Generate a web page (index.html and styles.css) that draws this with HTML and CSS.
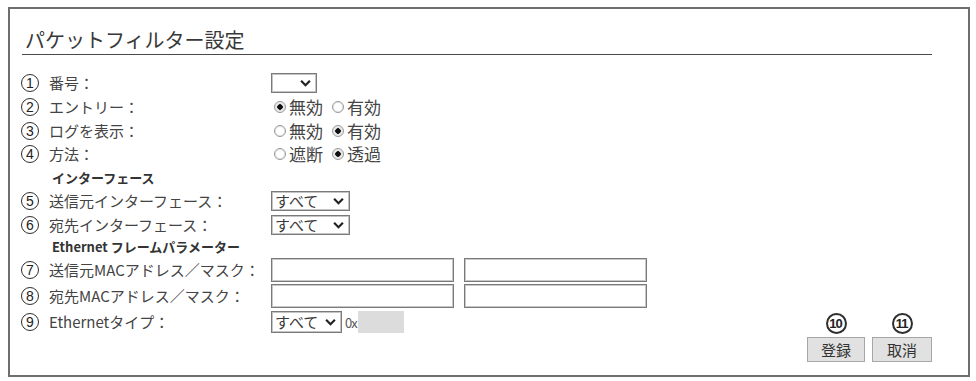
FILE: index.html
```html
<!DOCTYPE html>
<html lang="ja">
<head>
<meta charset="utf-8">
<title>パケットフィルター設定</title>
<link rel="stylesheet" href="styles.css">
</head>
<body>
<div class="panel">
  <div class="title-wrap"><h1 class="title">パケットフィルター設定</h1></div>
  <div class="body">
    <div class="form">
      <div class="row h22">
        <span class="num">1</span><span class="label">番号：</span>
        <span class="sel sel-num"><select class="select"><option></option></select><svg class="chev" viewBox="0 0 10 7"><path d="M1 1.5 L5 5.5 L9 1.5" /></svg></span>
      </div>
      <div class="row h25">
        <span class="num">2</span><span class="label">エントリー：</span>
        <span class="radios"><label class="radio"><input type="radio" name="entry" checked>無効</label><label class="radio"><input type="radio" name="entry">有効</label></span>
      </div>
      <div class="row h23">
        <span class="num">3</span><span class="label">ログを表示：</span>
        <span class="radios"><label class="radio"><input type="radio" name="log">無効</label><label class="radio"><input type="radio" name="log" checked>有効</label></span>
      </div>
      <div class="row h23">
        <span class="num">4</span><span class="label">方法：</span>
        <span class="radios"><label class="radio"><input type="radio" name="method">遮断</label><label class="radio"><input type="radio" name="method" checked>透過</label></span>
      </div>
      <div class="section h24">インターフェース</div>
      <div class="row h24">
        <span class="num">5</span><span class="label">送信元インターフェース：</span>
        <span class="sel sel-if"><select class="select"><option>すべて</option></select><svg class="chev" viewBox="0 0 10 7"><path d="M1 1.5 L5 5.5 L9 1.5" /></svg></span>
      </div>
      <div class="row h23">
        <span class="num">6</span><span class="label">宛先インターフェース：</span>
        <span class="sel sel-if"><select class="select"><option>すべて</option></select><svg class="chev" viewBox="0 0 10 7"><path d="M1 1.5 L5 5.5 L9 1.5" /></svg></span>
      </div>
      <div class="section h21">Ethernet フレームパラメーター</div>
      <div class="row h26">
        <span class="num">7</span><span class="label">送信元MACアドレス／マスク：</span>
        <span class="inputs"><input class="text" type="text"><input class="text" type="text"></span>
      </div>
      <div class="row h26">
        <span class="num">8</span><span class="label">宛先MACアドレス／マスク：</span>
        <span class="inputs"><input class="text" type="text"><input class="text" type="text"></span>
      </div>
      <div class="row h26">
        <span class="num">9</span><span class="label">Ethernetタイプ：</span>
        <span class="etype">
          <span class="sel sel-eth"><select class="select"><option>すべて</option></select><svg class="chev" viewBox="0 0 10 7"><path d="M1 1.5 L5 5.5 L9 1.5" /></svg></span>
          <span class="hex">0x</span><input class="hexbox" type="text" disabled>
        </span>
      </div>
    </div>
    <div class="actions">
      <span class="num anum">10</span><span class="num anum">11</span>
      <button class="btn" type="button">登録</button><button class="btn" type="button">取消</button>
    </div>
  </div>
</div>
</body>
</html>
```
FILE: styles.css
```css
html, body {
  margin: 0;
  padding: 0;
  background: #fff;
}
body {
  font-family: "Noto Sans CJK JP", "Noto Sans", sans-serif;
  color: #444;
}
.panel {
  margin: 7px 0 0 8px;
  width: 962px;
  height: 370px;
  box-sizing: border-box;
  border: 2px solid #6e6e6e;
  display: flex;
  flex-direction: column;
}
.title-wrap {
  margin-left: 12px;
  width: 910px;
  padding: 19px 0 2px 3px;
  box-sizing: border-box;
  border-bottom: 1px solid #4a4a4a;
}
.title {
  margin: 0;
  font-size: 20px;
  line-height: 24px;
  font-weight: 400;
  color: #383838;
}
.body {
  flex: 1;
  display: flex;
  justify-content: space-between;
}
.form {
  margin-top: 17px;
  display: flex;
  flex-direction: column;
}
.row {
  display: grid;
  grid-template-columns: 28px 222px auto;
  align-items: center;
  justify-items: start;
  padding-left: 11px;
  font-size: 15px;
}
.h21 { height: 21px; }
.h22 { height: 22px; }
.h23 { height: 23px; }
.h24 { height: 24px; }
.h25 { height: 25px; }
.h26 { height: 26px; }
.num {
  display: flex;
  align-items: center;
  justify-content: center;
  width: 18px;
  height: 18px;
  box-sizing: border-box;
  border: 1.5px solid #2e2e2e;
  border-radius: 50%;
  font-family: "Liberation Sans", "DejaVu Sans", sans-serif;
  font-size: 14px;
  line-height: 14px;
  color: #222;
}
.label {
  white-space: nowrap;
  line-height: 18px;
}
.section {
  display: flex;
  align-items: center;
  padding-left: 42px;
  font-size: 13px;
  font-weight: 700;
  color: #333;
}
.sel {
  position: relative;
  display: inline-block;
}
.select {
  appearance: none;
  -webkit-appearance: none;
  display: block;
  box-sizing: border-box;
  height: 20px;
  border: 1px solid #7a7a7a;
  box-shadow: inset 0 0 0 1px #c4c4c4;
  border-radius: 0;
  background: #fff;
  font-family: inherit;
  font-size: 15px;
  line-height: 16px;
  color: #3a3a3a;
  padding: 0 0 0 3px;
  margin: 0;
}
.sel-num .select { width: 46px; }
.sel-if .select { width: 79px; }
.sel-eth .select { width: 71px; height: 22px; }
.chev {
  position: absolute;
  top: 50%;
  right: 6px;
  width: 11px;
  height: 8px;
  margin-top: -4px;
  fill: none;
  stroke: #222;
  stroke-width: 2;
  pointer-events: none;
}
.radios {
  display: flex;
  align-items: center;
  padding-left: 3px;
}
.radio {
  display: inline-flex;
  align-items: center;
  margin-right: 9px;
  font-size: 17px;
  line-height: 19px;
}
.radio input {
  appearance: none;
  -webkit-appearance: none;
  width: 12px;
  height: 12px;
  margin: 0 3px 0 0;
  border: 1px solid #9a9a9a;
  border-radius: 50%;
  box-sizing: border-box;
  background: #fff;
  box-shadow: inset 0 0 0 1px #e2e2e2;
}
.radio input:checked {
  background: radial-gradient(circle, #111 0 2.5px, #e8e8e8 3px 100%);
  box-shadow: none;
}
.inputs {
  display: flex;
  gap: 10px;
}
.text {
  width: 183px;
  height: 24px;
  box-sizing: border-box;
  border: 1px solid #7a7a7a;
  box-shadow: inset 0 0 0 1px #c8c8c8;
  margin: 0;
  padding: 0 4px;
  font-family: inherit;
  font-size: 14px;
}
.etype {
  display: flex;
  align-items: center;
}
.hex {
  font-size: 13px;
  margin: 0 1px 0 3px;
  letter-spacing: -1px;
  color: #555;
}
.hexbox {
  width: 46px;
  height: 22px;
  box-sizing: border-box;
  border: 0;
  margin: 0;
  padding: 0;
  background: #dcdcdc;
}
.actions {
  align-self: flex-end;
  margin: 0 36px 13px 0;
  display: grid;
  grid-template-columns: 58px 60px;
  column-gap: 7px;
  row-gap: 3px;
  justify-items: center;
  align-items: center;
}
.anum {
  width: 21px;
  height: 21px;
  border-width: 2px;
  font-size: 13px;
  letter-spacing: -1px;
  font-weight: 700;
  padding-right: 1px;
}
.btn {
  width: 100%;
  height: 25px;
  margin: 0;
  padding: 0;
  border: 1px solid #a6a6a6;
  border-radius: 0;
  background: #e1e1e1;
  font-family: inherit;
  font-size: 15px;
  line-height: 20px;
  color: #333;
}
```
